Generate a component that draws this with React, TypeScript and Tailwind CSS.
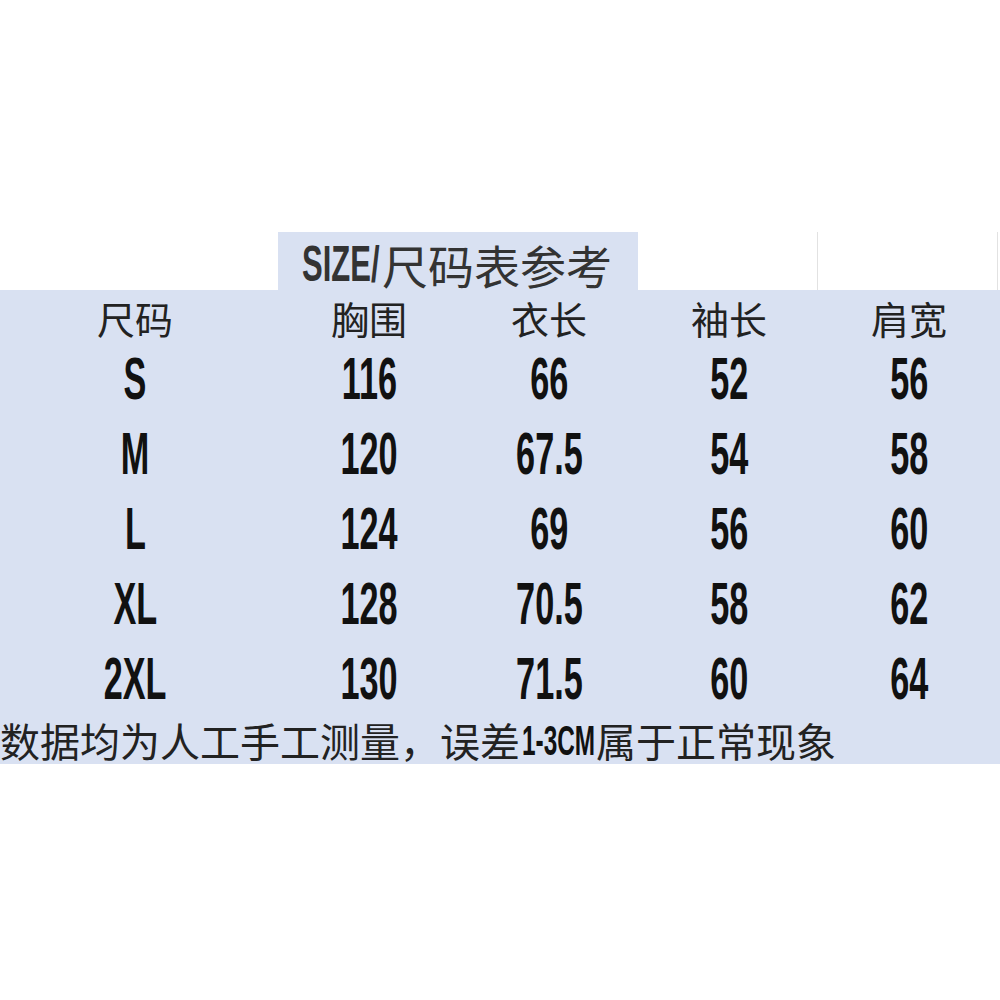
const cjk = '"Noto Sans CJK SC", "Noto Sans", sans-serif';
const num = '"Liberation Sans", Arial, sans-serif';

const rows = [
  ['S', '116', '66', '52', '56'],
  ['M', '120', '67.5', '54', '58'],
  ['L', '124', '69', '56', '60'],
  ['XL', '128', '70.5', '58', '62'],
  ['2XL', '130', '71.5', '60', '64'],
];

const headers = ['胸围', '衣长', '袖长', '肩宽'];

const Narrow = ({ children }: { children: string }) => (
  <span
    className="inline-block scale-x-[0.57] text-[60px] font-bold leading-none text-[#111]"
    style={{ fontFamily: num }}
  >
    {children}
  </span>
);

export default function App() {
  return (
    <div className="w-[1000px] h-[1000px] bg-white overflow-hidden">
      <div className="h-[232px]" />

      {/* title row */}
      <div className="flex h-[58px]">
        <div className="w-[278px]" />
        <div className="w-[360px] bg-[#d9e1f2] flex items-center pl-[24px] pt-[6px] text-[#333] whitespace-nowrap">
          <span className="inline-block w-[80px]">
            <span
              className="inline-block origin-left scale-x-[0.62] text-[50px] font-bold leading-none"
              style={{ fontFamily: num }}
            >
              SIZE/
            </span>
          </span>
          <span className="text-[46px] leading-none" style={{ fontFamily: cjk }}>
            尺码表参考
          </span>
        </div>
        <div className="w-[180px] border-r border-[#e2e2e2]" />
        <div className="w-[180px] border-r border-[#e2e2e2]" />
      </div>

      {/* table body */}
      <div className="bg-[#d9e1f2]">
        <div className="flex h-[51px] items-center pt-[4px] text-[38px] leading-none text-[#222]" style={{ fontFamily: cjk }}>
          <div className="w-[279px] pr-[9px] text-center">尺码</div>
          {headers.map((h) => (
            <div key={h} className="w-[180px] text-center">
              {h}
            </div>
          ))}
        </div>

        {rows.map((r) => (
          <div key={r[0]} className="flex h-[75px] items-center">
            <div className="w-[279px] pr-[9px] text-center">
              <Narrow>{r[0]}</Narrow>
            </div>
            {r.slice(1).map((v, i) => (
              <div key={i} className="w-[180px] text-center">
                <Narrow>{v}</Narrow>
              </div>
            ))}
          </div>
        ))}

        <div className="flex h-[48px] items-center whitespace-nowrap text-[40px] leading-none text-[#222]" style={{ fontFamily: cjk }}>
          <span>数据均为人工手工测量，误差</span>
          <span className="inline-block w-[76px] pl-[2px]">
            <span
              className="inline-block origin-left scale-x-[0.58] text-[42px] font-bold leading-none text-[#111]"
              style={{ fontFamily: num }}
            >
              1-3CM
            </span>
          </span>
          <span>属于正常现象</span>
        </div>
      </div>
    </div>
  );
}
